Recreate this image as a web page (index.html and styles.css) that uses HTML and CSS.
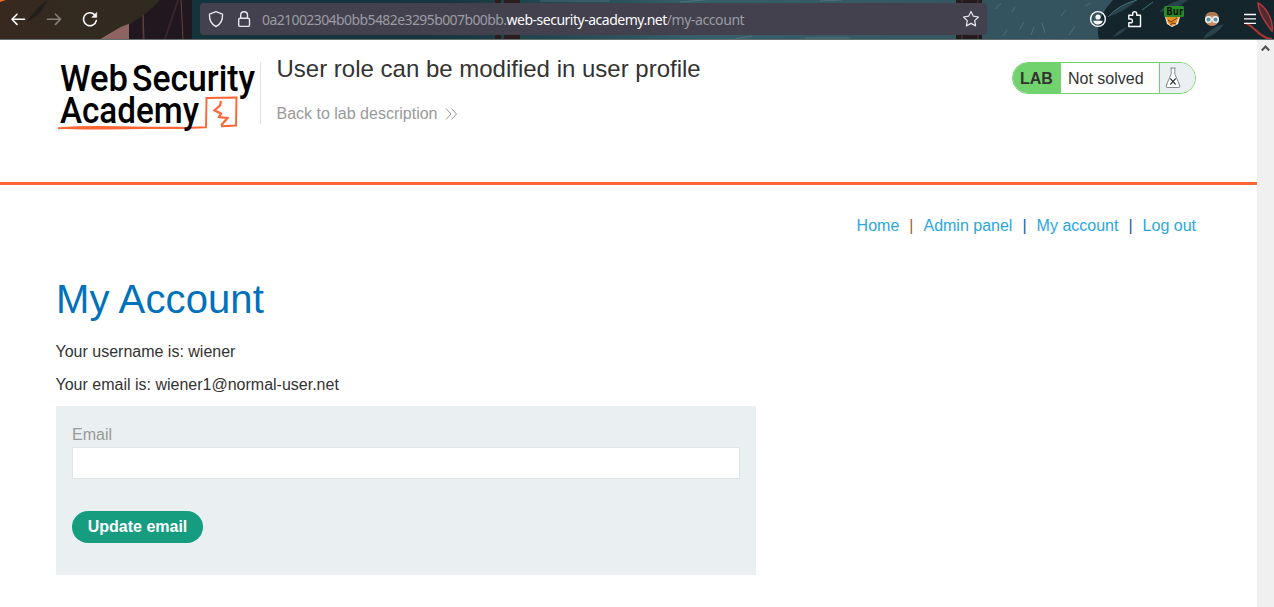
FILE: index.html
```
<!DOCTYPE html>
<html lang="en">
<head>
<meta charset="utf-8">
<title>User role can be modified in user profile</title>
<link rel="stylesheet" href="styles.css">
</head>
<body>
<div class="toolbar">
  <svg class="theme" width="1274" height="40" viewBox="0 0 1274 40" aria-hidden="true">
    <defs>
      <linearGradient id="teal" x1="0" x2="1"><stop offset="0" stop-color="#123039"/><stop offset=".35" stop-color="#17363f"/><stop offset=".55" stop-color="#35606a"/><stop offset=".8" stop-color="#34545f"/><stop offset="1" stop-color="#34505b"/></linearGradient>
      <linearGradient id="brown" x1="0" x2="1"><stop offset="0" stop-color="#38291f"/><stop offset="1" stop-color="#2e2b21"/></linearGradient>
    </defs>
    <rect width="1274" height="40" fill="url(#teal)"/>
    <path d="M100 0H192V40H100z" fill="#21171e"/>
    <path d="M100 39L129 22V39z" fill="#8e6463"/>
    <path d="M129 24L158 0M143 14V39M165 39L178 0" stroke="#37252a" stroke-width="2" fill="none"/>
    <path d="M143 13L144 39M181 0L183 39" stroke="#65433d" fill="none"/>
    <path d="M0 0H160Q140 22 117 28L100 39H0z" fill="url(#brown)"/>
    <path d="M27 22Q36 7 48 0L42 10Q36 18 27 22z" fill="#211e1b"/>
    <path d="M0 0H6L0 2z" fill="#ed6b20"/>
    <path d="M495 0H501V40H495zM504 0H520V40H504z" fill="#2b1d1d"/>
    <path d="M956 0H982V40H956z" fill="#251a1c"/>
    <path d="M962 0V40M978 0V40" stroke="#4b3835"/>
    <path d="M1113 0H1274V40H1099Q1094 20 1113 0z" fill="#15252c"/>
    <path d="M1108 17Q1118 5 1137 0Q1126 11 1108 17zM1113 37Q1118 30 1127 27Q1123 34 1113 37zM1159 12Q1168 3 1180 0H1188Q1176 10 1159 12zM1203 39Q1210 27 1224 24Q1218 34 1203 39z" fill="#29424c"/>
    <path d="M1108 17Q1118 5 1137 0M1142 10L1153 2" stroke="#3e7275" fill="none"/>
    <path d="M1258 3C1265 6 1274 20 1272 31C1267 25 1258 12 1258 3z" fill="#512a31" stroke="#b5383a" stroke-width="1.5"/>
    <path d="M1246 23C1253 26 1258 35 1267 38M1256 30Q1262 38 1272 39" stroke="#ad3435" stroke-width="2" fill="none"/>
    <path d="M1012 12L1015 7M1020 29L1024 22M1031 35L1034 27M1045 33L1042 23M1061 16L1066 10M1069 35L1075 26M1085 6L1091 3M1003 36L1007 30M995 9L1001 3M540 1H610M680 2L705 0M820 1L842 0M735 39L752 36M805 38H850" stroke="#5b7983" stroke-width=".7"/>
    <path d="M0 39.5H1274" stroke="#66706f"/>
  </svg>
  <div class="bar-row">
    <svg class="nav-icons" width="100" height="38" viewBox="0 0 100 38" fill="none" stroke-width="1.6" stroke-linecap="round" stroke-linejoin="round">
      <path d="M24.5 19.3H12M17 14.2L12 19.3L17 24.4" stroke="#fbfbfe"/>
      <path d="M47.5 19.3H60M55.500 14.2L60.500 19.3L55.500 24.400" stroke="#85807c"/>
      <path d="M96.300 20.600A6.500 6.500 0 1 1 94.500 14.600" stroke="#fbfbfe"/>
      <path d="M96.700 12.800V17.300H92.200z" fill="#fbfbfe" stroke="#fbfbfe" stroke-width=".7"/>
    </svg>
    <div class="address">
      <svg class="security" width="62" height="32" viewBox="200 3 62 32" fill="none" stroke="#e7e7eb" stroke-width="1.4" stroke-linejoin="round">
        <path d="M216 11.700L222.500 14.200C222.800 20 220 24.600 216 26.500C212 24.600 209.200 20 209.500 14.200z"/>
        <rect x="238.700" y="18.200" width="10.800" height="8.200" rx="1.500"/>
        <path d="M240.700 18V15.200A3.400 3.400 0 0 1 247.500 15.200V18"/>
      </svg>
      <div class="url">0a21002304b0bb5482e3295b007b00bb.<span class="domain">web-security-academy.net</span><span class="url-path">/my-account</span></div>
      <svg class="star" width="18" height="18" viewBox="0 0 18 18" fill="none" stroke="#e7e7eb" stroke-width="1.200" stroke-linejoin="round"><path d="M9 1.500L11.300 6.200L16.500 7L12.700 10.600L13.600 15.900L9 13.400L4.400 15.900L5.300 10.600L1.500 7L6.700 6.200z"/></svg>
    </div>
    <svg class="extensions" width="184" height="38" viewBox="1080 0 184 38">
      <circle cx="1098" cy="19" r="7.400" fill="none" stroke="#fbfbfe" stroke-width="1.400"/>
      <circle cx="1098" cy="17" r="2.600" fill="#fbfbfe"/><path d="M1093.200 20.700H1102.800Q1102 24.400 1098 24.400Q1094 24.400 1093.200 20.700z" fill="#fbfbfe"/>
      <path d="M1128.800 15.300H1132.700V13.700A2 2 0 0 1 1136.700 13.700V15.300H1140.500V26.500H1128.800V22.800H1130.500A1.800 1.800 0 0 0 1130.500 19H1128.800z" fill="none" stroke="#fbfbfe" stroke-width="1.400" stroke-linejoin="round"/>
      <path d="M1165 17L1167 24L1172 27L1178 24L1180 17z" fill="#f4ece1"/>
      <path d="M1166 17H1179L1176 24L1172 26L1168 23z" fill="#ed8c22"/>
      <path d="M1168 20L1171 22L1177 18M1170 25L1173 23L1176 24" stroke="#633d20" fill="none"/>
      <rect x="1164" y="6" width="20" height="11" rx="1.500" fill="#298a29"/>
      <text class="badge" x="1166.200" y="15" textLength="17" lengthAdjust="spacingAndGlyphs">Bur</text>
      <circle cx="1212" cy="19" r="7" fill="#c98c69"/>
      <path d="M1205.400 17Q1206 12 1212 12Q1218 12 1218.600 17Q1212 13.500 1205.400 17z" fill="#a97a52"/>
      <circle cx="1208.500" cy="19.500" r="2.800" fill="#668d9e" stroke="#e4eff2" stroke-width="1.500"/><circle cx="1215.500" cy="19.500" r="2.800" fill="#668d9e" stroke="#e4eff2" stroke-width="1.500"/>
      <path d="M1244 14.500H1256M1244 18.900H1256M1244 23.300H1256" stroke="#fbfbfe" stroke-width="1.300"/>
    </svg>
  </div>
</div>
<div class="viewport">
  <div class="page">
    <header class="lab-header">
      <svg class="logo" width="204" height="76" viewBox="56 58 204 76">
        <text class="wordmark" x="60" y="90.500" textLength="68" lengthAdjust="spacingAndGlyphs">Web</text>
        <text class="wordmark" x="132" y="90.500" textLength="123" lengthAdjust="spacingAndGlyphs">Security</text>
        <path d="M58 128.200Q85 126.500 120 127.300Q165 129 206 127.200L206.500 98L236.500 97.500L236 125.500L221 126.300" fill="none" stroke="#f63" stroke-width="1.900"/>
        <path d="M57 128.500Q90 130.800 190 127.800L180 126.800Q95 126.500 57 128.500z" fill="#f63"/>
        <path d="M221 101L220 105.500L214.500 110.500L221 113.500L219 117L227.500 118L221 125.500" fill="none" stroke="#f63" stroke-width="2.200"/>
        <text class="wordmark" x="60" y="123" textLength="139" lengthAdjust="spacingAndGlyphs">Academy</text>
      </svg>
      <div class="lab-title">
        <h2>User role can be modified in user profile</h2>
        <a class="back">Back to lab description <svg width="13" height="12" viewBox="0 0 13 12" fill="none" stroke="#999"><path d="M1 .5L6 6L1 11.500M6.500 .5L11.500 6L6.500 11.500"/></svg></a>
      </div>
      <div class="status">
        <span class="status-lab">LAB</span><span class="status-text">Not solved</span>
        <span class="flask"><svg width="18" height="22" viewBox="0 0 20 22" preserveAspectRatio="none"><path d="M7 1H13M8 1V7L2.500 18.500Q2 20.500 4 20.500H16Q18 20.500 17.500 18.500L12 7V1" fill="#fff" stroke="#858b8e" stroke-width="1.100"/><path d="M7 11.500L13 17.500M13 11.500L7 17.500" stroke="#333332" stroke-width="1.200"/></svg></span>
      </div>
    </header>
    <main class="content">
      <nav class="top-links"><a>Home</a><i>|</i><a>Admin panel</a><i>|</i><a>My account</a><i>|</i><a>Log out</a></nav>
      <h1>My Account</h1>
      <p>Your username is: wiener</p>
      <p>Your email is: wiener1@normal-user.net</p>
      <form class="email-form">
        <label for="email">Email</label>
        <input id="email" type="email">
        <button type="button">Update email</button>
      </form>
    </main>
  </div>
  <div class="scrollbar"><svg width="9" height="7" viewBox="0 0 9 7" fill="none" stroke="#505050" stroke-width="2"><path d="M.8 5.500L4.500 1.500L8.200 5.500"/></svg></div>
</div>
</body>
</html>
```

FILE: styles.css
```
* { box-sizing: border-box; }
body {
  margin: 0;
  height: 607px;
  overflow: hidden;
  background: #fff;
  color: #333332;
  font: 16px/20px "Liberation Sans", Arial, sans-serif;
}
svg { display: block; flex: none; }
.toolbar { position: relative; height: 40px; }
.theme { position: absolute; inset: 0; }
.bar-row { position: relative; display: flex; align-items: flex-start; height: 40px; }
.address {
  display: flex;
  align-items: center;
  width: 787px;
  height: 32px;
  margin: 3px 93px 0 100px;
  border-radius: 4px;
  background: #42414d;
}
.url {
  flex: 1;
  padding-top: 2px;
  color: #9c9ba3;
  font: 14px/20px "Noto Sans", sans-serif;
  letter-spacing: -.59px;
  white-space: nowrap;
}
.domain { color: #fbfbfe; letter-spacing: -.49px; }
.url-path { letter-spacing: -.42px; }
.star { margin-right: 7px; }
.badge { font: bold 10px "DejaVu Sans", sans-serif; fill: #071707; }
.viewport { display: flex; height: 567px; }
.page { flex: 1; }
.scrollbar {
  display: flex;
  justify-content: center;
  width: 17px;
  padding-top: 5px;
  background: #f0f0f0;
}
.lab-header {
  display: flex;
  height: 145px;
  padding: 18px 61px 0 56px;
  border-bottom: 3px solid #f63;
}
.logo { overflow: visible; }
.wordmark { font: 500 36px Roboto, sans-serif; fill: #000; }
.lab-title {
  height: 62px;
  margin-top: 4px;
  padding-left: 15.5px;
  border-left: 1px solid #e3e3e3;
}
h2 { margin: -7px 0 0; font-size: 24px; line-height: 28px; font-weight: 400; }
.back { display: flex; align-items: center; gap: 8px; margin-top: 21px; color: #999; }
.status {
  display: flex;
  width: 184px;
  height: 32px;
  margin: 4px 0 0 auto;
  overflow: hidden;
  border: 1px solid #72d36e;
  border-radius: 16px;
  line-height: 32px;
}
.status-lab { width: 48px; padding-left: 7px; background: #72d36e; font-weight: 700; }
.status-text { width: 98px; padding-left: 7px; }
.flask { flex: 1; padding: 4px 0 0 4px; border-left: 1px solid #72d36e; background: #eaeff2; }
.content { padding: 0 61px 0 56px; }
.top-links { display: flex; justify-content: flex-end; gap: 10px; padding-top: 31px; color: #29a7df; }
.top-links i { width: 4.2px; color: #245a98; font-style: normal; }
.top-links i:nth-of-type(1) { color: #a75d26; }
h1 { margin: 38px 0 18px; color: #0071bc; font-size: 40px; line-height: 50px; font-weight: 400; letter-spacing: .12px; }
p { margin: 0 0 13px -.5px; }
.email-form {
  display: flex;
  flex-direction: column;
  align-items: flex-start;
  width: 700px;
  height: 169px;
  margin-top: -2px;
  padding: 19px 16px 18px;
  background: #eaeff2;
}
label { color: #999; line-height: 20px; }
input { width: 668px; height: 32px; margin: 2px 0 32px; border: 1px solid #e2e4e5; background: #fff; }
button {
  width: 131px;
  height: 32px;
  padding: 0;
  border: 0;
  border-radius: 16px;
  background: #169c7f;
  color: #fff;
  font: bold 16px "Liberation Sans", Arial, sans-serif;
}
```
